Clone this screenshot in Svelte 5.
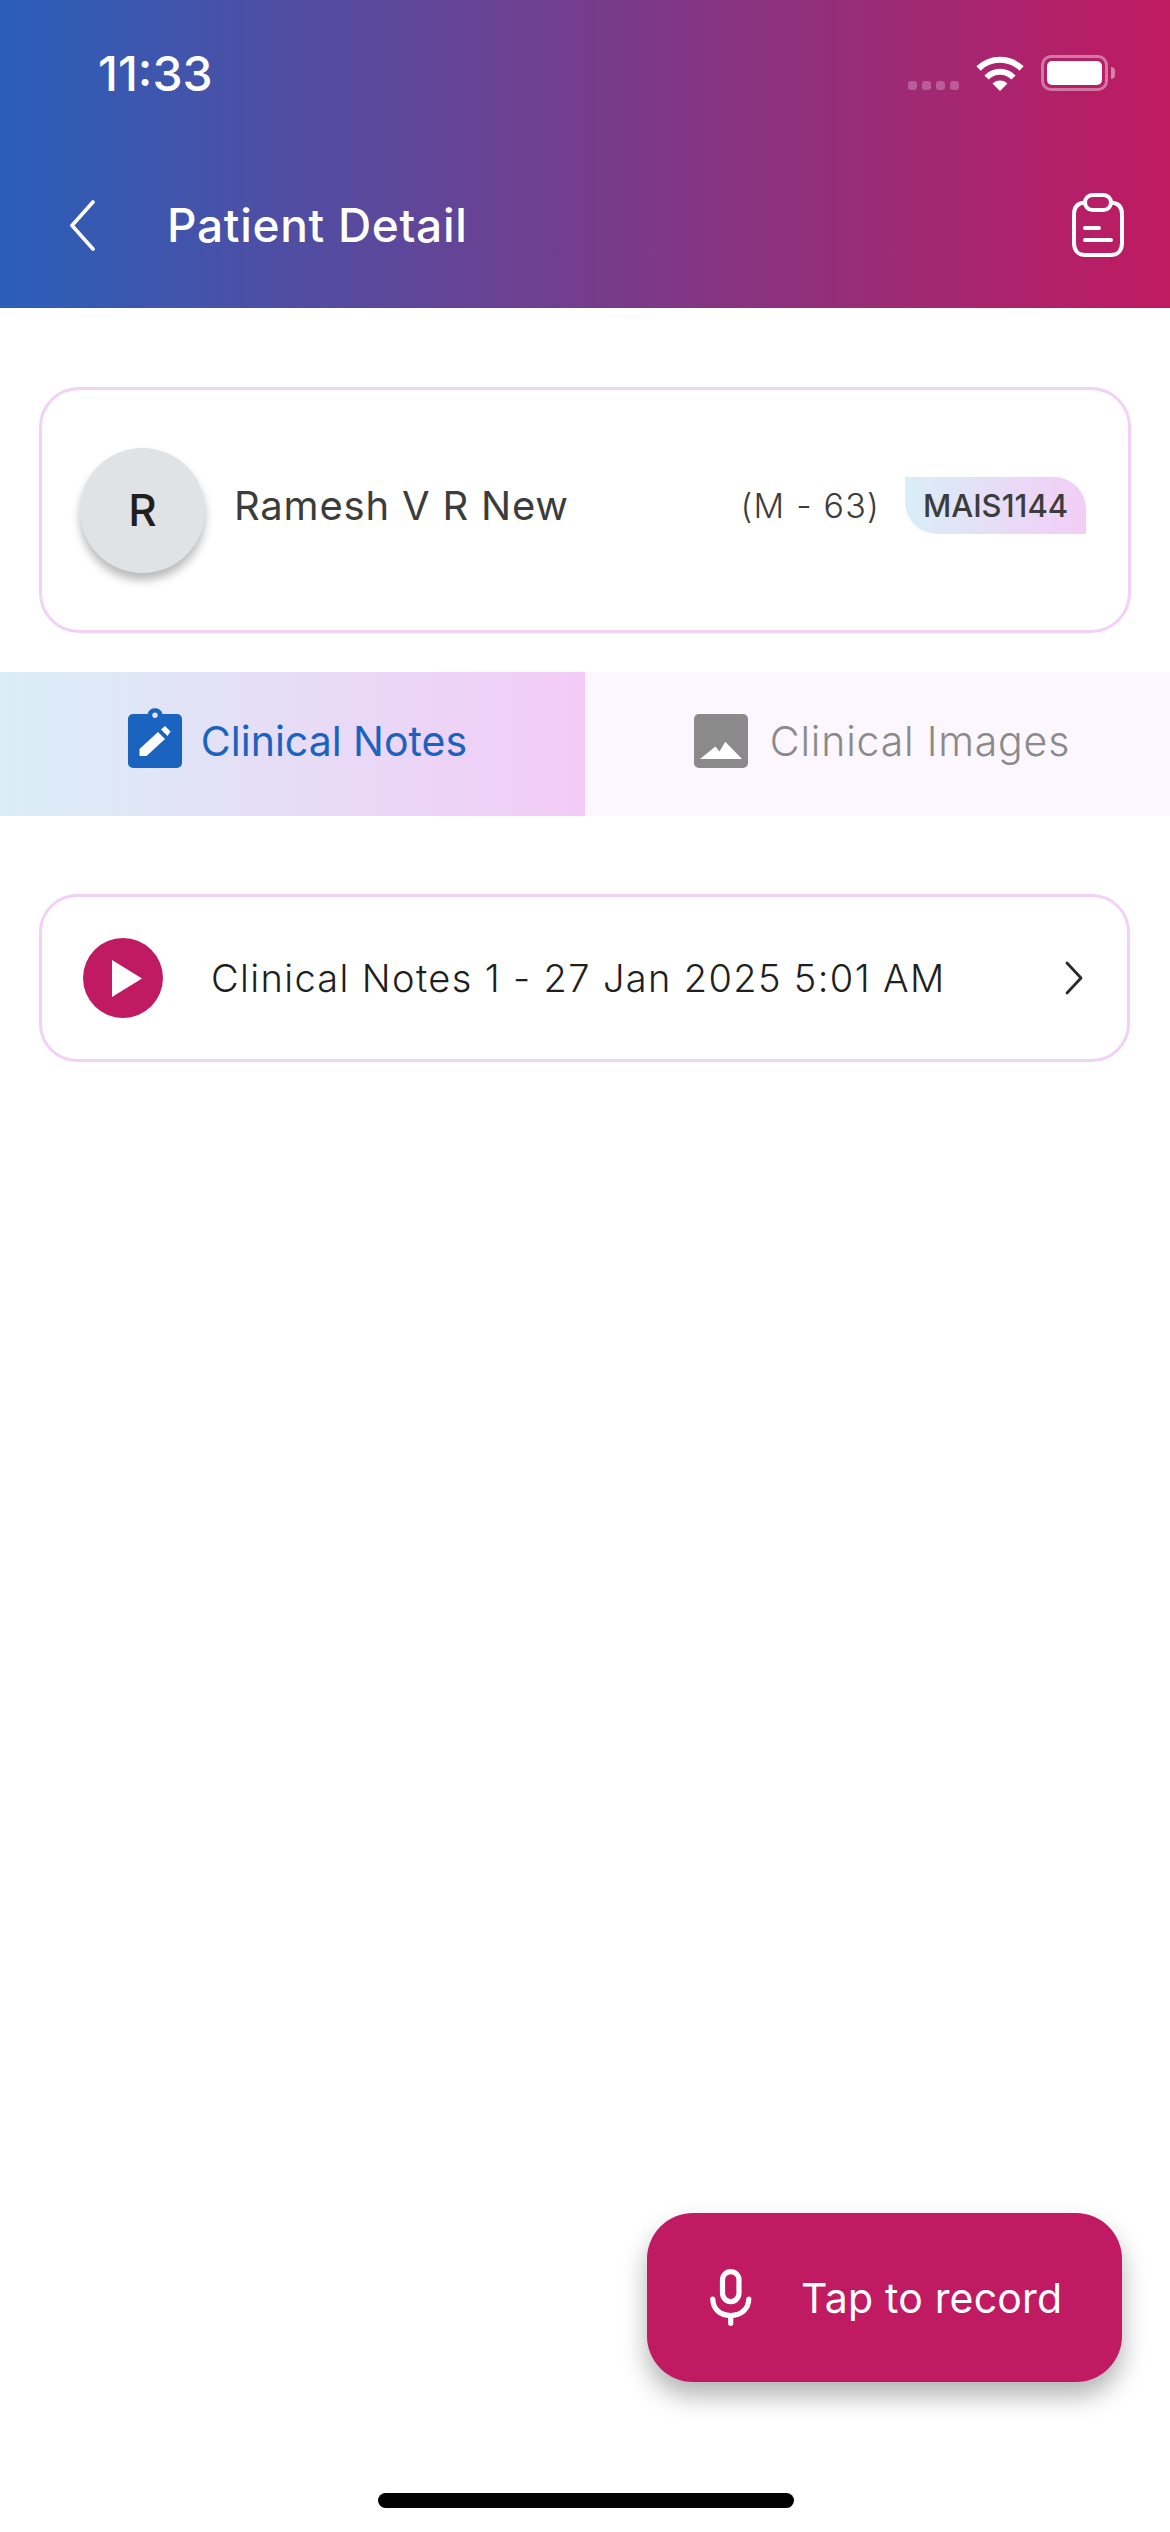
<script>
  const name = 'Ramesh V R New';
</script>

<div class="screen">
  <header class="top">
    <div class="status">
      <span class="time">11:33</span>
      <div class="status-icons">
        <div class="dots"><i></i><i></i><i></i><i></i></div>
        <svg class="wifi" width="48" height="36" viewBox="0 0 48 36" fill="none">
          <path d="M2.5 13.5A31 31 0 0 1 45.500 13.500" stroke="#fff" stroke-width="6"/>
          <path d="M10.500 22.500A19 19 0 0 1 37.500 22.500" stroke="#fff" stroke-width="6"/>
          <path d="M24 36L16.500 28.500A10.600 10.600 0 0 1 31.500 28.500Z" fill="#fff"/>
        </svg>
        <div class="battery"><div class="cell"></div></div>
        <div class="nub"></div>
      </div>
    </div>
    <div class="nav">
      <svg class="back" width="25" height="51" viewBox="0 0 25 51" fill="none">
        <path d="M23 2L2 25.500L23 49" stroke="#fff" stroke-width="3.600" stroke-linecap="round" stroke-linejoin="round"/>
      </svg>
      <h1>Patient Detail</h1>
      <svg class="clip" width="52" height="64" viewBox="0 0 52 64" fill="none" stroke="#fff" stroke-width="4" stroke-linecap="round">
        <path d="M13 9.500C6 10 2 14 2 21V50C2 57 6 62 13 62H39C46 62 50 57 50 50V21C50 14 46 10 39 9.500"/>
        <rect x="13" y="2" width="26" height="15" rx="7.500"/>
        <path d="M13 35H27M13 47H39"/>
      </svg>
    </div>
  </header>

  <section class="patient">
    <div class="avatar">R</div>
    <div class="info">
      <span class="name">{name}</span>
      <span class="age">(M - 63)</span>
      <span class="code">MAIS1144</span>
    </div>
  </section>

  <nav class="tabs">
    <div class="tab active">
      <svg class="notes-icon" width="54" height="60" viewBox="0 0 54 60">
        <path fill="#1a64c0" fill-rule="evenodd" d="M5 6H19.500A7.800 7.800 0 0 1 34.500 6H49A5 5 0 0 1 54 11V55A5 5 0 0 1 49 60H5A5 5 0 0 1 0 55V11A5 5 0 0 1 5 6ZM27 4.500A2.700 2.700 0 1 0 27 9.900A2.700 2.700 0 1 0 27 4.500Z"/>
        <path fill="#fff" d="M11.500 48V41L30 24L37 31L18.500 48Z"/>
        <path fill="#fff" d="M33 21.500L37 18L42.500 23.500L39.500 28Z"/>
      </svg>
      <span>Clinical Notes</span>
    </div>
    <div class="tab">
      <svg width="54" height="54" viewBox="0 0 54 54">
        <rect width="54" height="54" rx="5" fill="#8a8a8a"/>
        <path fill="#fff" d="M6 45L21.400 32.500L25.500 37.500L31.300 27.700L48 45Z"/>
      </svg>
      <span>Clinical Images</span>
    </div>
  </nav>

  <section class="note">
    <div class="play">
      <svg width="30" height="37" viewBox="0 0 30 37"><path d="M0 0L30 18.500L0 37Z" fill="#fff"/></svg>
    </div>
    <span class="note-text">Clinical Notes 1 - 27 Jan 2025 5:01 AM</span>
    <svg class="more" width="18" height="34" viewBox="0 0 18 34" fill="none">
      <path d="M2 2L16 17L2 32" stroke="#2a2a2a" stroke-width="2.800" stroke-linecap="round" stroke-linejoin="round"/>
    </svg>
  </section>

  <div class="fab">
    <svg width="42" height="57" viewBox="0 0 42 57" fill="none" stroke="#fff" stroke-width="5.200" stroke-linecap="round">
      <rect x="12.500" y="2.600" width="16.500" height="30" rx="8.250"/>
      <path d="M2.800 30C3 40 10 46.500 20.700 46.500C31 46.500 38.500 40 38.800 30"/>
      <path d="M20.700 46.500V54.300"/>
    </svg>
    <span>Tap to record</span>
  </div>

  <div class="home"></div>
</div>

<style>
  :global(body) {
    margin: 0;
    background: #fff;
  }
  .screen {
    position: relative;
    width: 1170px;
    height: 2532px;
    overflow: hidden;
    background: #fff;
    font-family: Inter, "Noto Sans", sans-serif;
    color: #3c3c3c;
  }
  .top {
    height: 308px;
    background: linear-gradient(90deg, #2a5fb9 0%, #c01a60 100%);
    color: #fff;
  }
  .status {
    height: 146px;
    display: flex;
    align-items: center;
    justify-content: space-between;
    padding: 0 55px 0 98px;
    box-sizing: border-box;
  }
  .time {
    font-size: 48px;
    font-weight: 500;
    letter-spacing: 0;
  }
  .status-icons {
    display: flex;
    align-items: center;
  }
  .dots {
    display: flex;
    gap: 5px;
    align-self: flex-end;
    margin-right: 17px;
    margin-bottom: 1px;
  }
  .dots i {
    width: 9px;
    height: 9px;
    border-radius: 3px;
    background: rgba(255, 255, 255, 0.25);
  }
  .wifi {
    margin-right: 17px;
  }
  .battery {
    box-sizing: border-box;
    width: 67px;
    height: 36px;
    border: 3px solid rgba(255, 255, 255, 0.4);
    border-radius: 10px;
    padding: 3px;
  }
  .cell {
    height: 100%;
    background: #fff;
    border-radius: 5px;
  }
  .nub {
    width: 4px;
    height: 12px;
    margin-left: 3px;
    background: rgba(255, 255, 255, 0.45);
    border-radius: 0 6px 6px 0;
  }
  .nav {
    height: 162px;
    display: flex;
    align-items: center;
    padding: 0 46px 4px 70px;
    box-sizing: border-box;
  }
  .nav h1 {
    margin: 0 0 0 72px;
    flex: 1;
    font-size: 46px;
    font-weight: 500;
    letter-spacing: 0.7px;
  }
  .patient {
    box-sizing: border-box;
    height: 246px;
    margin: 79px 39px 0;
    padding: 0 42px 0 38px;
    border: 3px solid #f3d1f7;
    border-radius: 40px;
    display: flex;
    align-items: center;
  }
  .avatar {
    width: 125px;
    height: 125px;
    flex: none;
    border-radius: 50%;
    background: #e1e2e4;
    box-shadow: 0 7px 10px rgba(0, 0, 0, 0.28);
    display: flex;
    align-items: center;
    justify-content: center;
    font-size: 44px;
    font-weight: 500;
    color: #1f1f1f;
  }
  .info {
    flex: 1;
    display: flex;
    align-items: center;
    margin-left: 29px;
    margin-bottom: 10px;
  }
  .name {
    flex: 1;
    font-size: 40px;
    font-weight: 400;
    letter-spacing: 0.8px;
  }
  .age {
    font-size: 34px;
    font-weight: 300;
    letter-spacing: 1.200px;
    margin-right: 25px;
  }
  .code {
    box-sizing: border-box;
    width: 181px;
    height: 57px;
    display: flex;
    align-items: center;
    justify-content: center;
    font-size: 31px;
    font-weight: 500;
    background: linear-gradient(90deg, #d9eef7, #f3cdf6);
    border-radius: 0 32px 0 32px;
  }
  .tabs {
    display: grid;
    grid-template-columns: 585px 585px;
    height: 144px;
    margin-top: 39px;
  }
  .tab {
    box-sizing: border-box;
    display: flex;
    align-items: center;
    justify-content: center;
    gap: 22px;
    padding: 0 0 6px 9px;
    background: #fcf6fe;
    color: #8a8a8a;
    font-size: 41px;
    font-weight: 300;
    letter-spacing: 0.8px;
  }
  .tab.active {
    background: linear-gradient(90deg, #daeef7, #f3cbf6);
    color: #1a64c0;
    font-weight: 400;
    gap: 19px;
    padding-left: 10px;
    letter-spacing: 0;
  }
  .notes-icon {
    margin-bottom: 6px;
  }
  .note {
    box-sizing: border-box;
    height: 168px;
    margin: 78px 40px 0 39px;
    padding: 0 44px 0 41px;
    border: 3px solid #f3d1f7;
    border-radius: 38px;
    display: flex;
    align-items: center;
  }
  .play {
    width: 80px;
    height: 80px;
    flex: none;
    border-radius: 50%;
    background: #bf1a62;
    display: flex;
    align-items: center;
    padding-left: 29px;
    box-sizing: border-box;
  }
  .play svg {
    display: block;
  }
  .note-text {
    flex: 1;
    margin-left: 48px;
    font-size: 38px;
    font-weight: 300;
    letter-spacing: 1.350px;
    color: #1f1f1f;
  }
  .fab {
    position: absolute;
    left: 647px;
    top: 2213px;
    width: 475px;
    height: 169px;
    box-sizing: border-box;
    padding: 0 0 0 63px;
    border-radius: 46px;
    background: #bf1a62;
    box-shadow: 0 14px 26px rgba(0, 0, 0, 0.3);
    color: #fff;
    display: flex;
    align-items: center;
    gap: 49px;
    font-size: 41px;
    letter-spacing: 0.2px;
  }
  .home {
    position: absolute;
    left: 378px;
    top: 2493px;
    width: 416px;
    height: 15px;
    border-radius: 8px;
    background: #000;
  }
</style>
